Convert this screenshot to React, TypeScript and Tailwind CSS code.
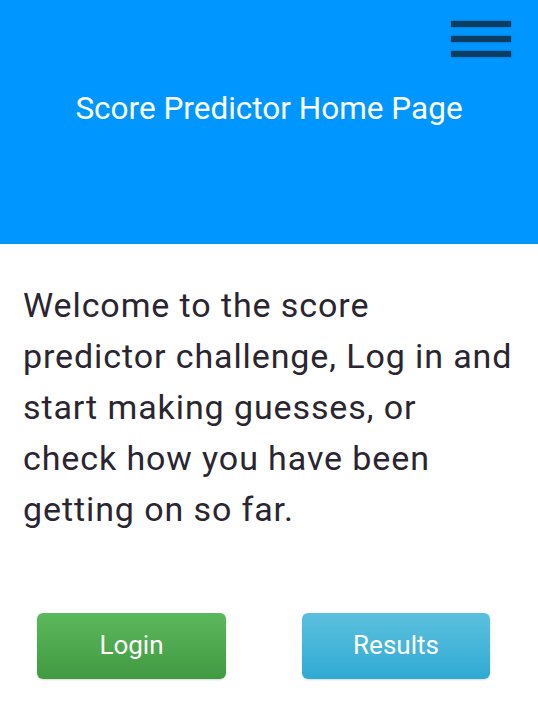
import React from 'react';

const font = { fontFamily: 'Roboto, "Noto Sans", sans-serif' };

const App: React.FC = () => {
  return (
    <div className="min-h-[720px] w-[538px] bg-white" style={font}>
      {/* Header */}
      <header className="flex h-[244px] flex-col bg-[#0096ff] pt-[21px]">
        <div className="flex justify-end pr-[27px]">
          <button className="flex flex-col gap-[9px]" aria-label="menu">
            <span className="block h-[6px] w-[60px] bg-[#0b3d63] shadow-[0_0_2px_rgba(0,40,80,0.6)]" />
            <span className="block h-[6px] w-[60px] bg-[#0b3d63] shadow-[0_0_2px_rgba(0,40,80,0.6)]" />
            <span className="block h-[6px] w-[60px] bg-[#0b3d63] shadow-[0_0_2px_rgba(0,40,80,0.6)]" />
          </button>
        </div>
        <h1 className="mt-[32px] text-center text-[31.5px] leading-[40px] font-normal text-white">
          Score Predictor Home Page
        </h1>
      </header>

      {/* Intro */}
      <p className="px-[23px] pt-[36px] text-[34px] leading-[51px] tracking-[0.9px] text-[#2a2531]">
        Welcome to the score predictor challenge, Log in and start making guesses, or check how you have been getting on so far.
      </p>

      {/* Actions */}
      <div className="mt-[78px] flex justify-between pl-[37px] pr-[48px]">
        <button className="h-[66px] w-[189px] rounded-[6px] bg-gradient-to-b from-[#5cb85c] to-[#419a41] pb-[2px] text-[26px] text-white shadow-[0_1px_2px_rgba(0,0,0,0.15)]">
          Login
        </button>
        <button className="h-[66px] w-[188px] rounded-[6px] bg-gradient-to-b from-[#5bc0de] to-[#2eaad3] pb-[2px] text-[26px] text-white shadow-[0_1px_2px_rgba(0,0,0,0.15)]">
          Results
        </button>
      </div>
    </div>
  );
};

export default App;
